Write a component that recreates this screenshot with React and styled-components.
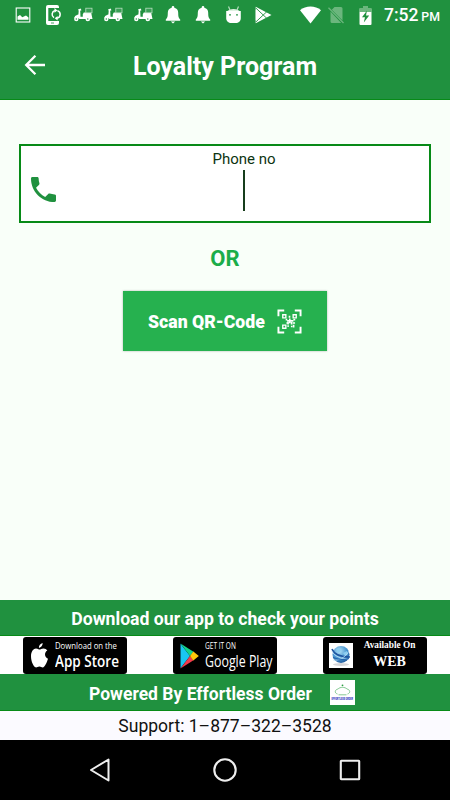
import React, { useState } from 'react';
import styled, { createGlobalStyle } from 'styled-components';

function ImageIcon() {
  return (
    <svg width="16" height="16" viewBox="0 0 16 16">
      <rect x="1.2" y="1" width="13.6" height="14" fill="none" stroke="#fff" strokeWidth="1.1" />
      <path d="M2.5 12.8V9.5L5 8l2.3 2.2L11 8.6l2.5 2v2.2z" fill="#fff" />
    </svg>
  );
}

function PhoneSyncIcon() {
  return (
    <svg width="17" height="20" viewBox="0 0 17 20">
      <path d="M3 0h9a2 2 0 0 1 2 2v1H3v13h11v2a2 2 0 0 1-2 2H3a2 2 0 0 1-2-2V2a2 2 0 0 1 2-2z" fill="#fff" />
      <path d="M1 3h2.300v13H1z" fill="#fff" />
      <path d="M9 12.700a4 4 0 0 1 .9-7.200M12.400 5.600a4 4 0 0 1-.3 7.700" fill="none" stroke="#fff" strokeWidth="1.500" />
      <path d="M9.500 3.100v4.600l2.900-2.300zM12.600 11v4.600l-2.900-2.300z" fill="#fff" />
      <path d="M6 18h3" stroke="#20913f" strokeWidth=".8" />
    </svg>
  );
}

function ScooterIcon() {
  return (
    <svg width="20" height="16" viewBox="0 0 20 16">
      <path d="M5 2.500L7.600 1.600l.9 1.600-1.300.6.3 6h2.300V7.300l1-1.800h7.400l.6 3.200.7 3.300H6.500L5 10.900l-3.700.2.800-2 2.400-1.400.9-.3.300-3.600z" fill="#fff" />
      <circle cx="3.300" cy="12" r="2.200" fill="#fff" />
      <circle cx="3.300" cy="12" r=".7" fill="#20913f" />
      <circle cx="14.800" cy="12" r="2.300" fill="#fff" />
      <circle cx="14.800" cy="12" r=".7" fill="#20913f" />
      <rect x="12.800" y="1.200" width="6.200" height="4.600" fill="#3a9f56" stroke="#b9ddc1" strokeWidth=".8" />
    </svg>
  );
}

function BellIcon() {
  return (
    <svg width="16" height="18" viewBox="0 0 16 18">
      <path d="M8 0a1.300 1.300 0 0 1 1.300 1.300v.5C12 2.400 13.200 4.300 13.200 6.800c0 4 .5 5.200 2 6.700v1.300H.8v-1.300C2.300 12 2.800 10.800 2.800 6.800c0-2.500 1.200-4.400 3.900-5v-.5A1.300 1.300 0 0 1 8 0zM5.800 15.400h4.400L8 17.600z" fill="#fff" />
    </svg>
  );
}

function AndroidIcon() {
  return (
    <svg width="17" height="18" viewBox="0 0 17 18">
      <path d="M3.500.5L5 4M13.500.5L12 4" stroke="#b5dcbd" strokeWidth="1.200" />
      <path d="M2 5.500c2-3.500 11-3.500 13 0z" fill="#dff1e2" />
      <path d="M1.200 5h14.600v7c0 3.500-2.300 5-5 5H6.200c-2.700 0-5-1.500-5-5z" fill="#fff" />
      <circle cx="5" cy="8.800" r=".9" fill="#20913f" />
      <circle cx="12" cy="8.800" r=".9" fill="#20913f" />
    </svg>
  );
}

function PlayIcon() {
  return (
    <svg width="17" height="18" viewBox="0 0 17 18">
      <path d="M.7.8L16.500 9 .7 17.200z" fill="#fff" />
      <path d="M1 2.200L12.500 13M1 15.800L12.500 5" stroke="#20913f" strokeWidth=".9" />
      <path d="M.7 3.500l5.700 5.500-5.700 5.500z" fill="#fff" />
    </svg>
  );
}

function WifiIcon() {
  return (
    <svg width="21" height="18" viewBox="0 0 22 18">
      <path d="M0 4C6-1.200 16-1.200 22 4L11 17.800z" fill="#fff" />
    </svg>
  );
}

function NoSimIcon() {
  return (
    <svg width="17" height="18" viewBox="0 0 17 18">
      <path d="M6.500 1H13a1.500 1.500 0 0 1 1.500 1.500v12L3.800 3.700zM2.500 5.400L13.200 17H4a1.500 1.500 0 0 1-1.500-1.500z" fill="#6bb67d" />
      <path d="M.5 1.800L15.500 17" stroke="#6bb67d" strokeWidth="1.300" />
    </svg>
  );
}

function BatteryIcon() {
  return (
    <svg width="13" height="19" viewBox="0 0 13 19">
      <path d="M4 0h5v2h2.700A1.300 1.300 0 0 1 13 3.300V6H0V3.300A1.300 1.300 0 0 1 1.300 2H4z" fill="#6bb67d" />
      <path d="M.5 6h12v12a1 1 0 0 1-1 1h-10a1 1 0 0 1-1-1z" fill="#fff" />
      <path d="M8 4.500l-5 6.800h3l-1.200 5.200 5.400-7H7z" fill="#20913f" />
    </svg>
  );
}

function BackArrow() {
  return (
    <svg width="22" height="22" viewBox="0 0 22 22">
      <path d="M21 11H2.800M11.400 1.800L2.200 11l9.200 9.200" fill="none" stroke="#fff" strokeWidth="2.300" />
    </svg>
  );
}

function PhoneIcon() {
  return (
    <svg width="25" height="25" viewBox="3 3 18 18">
      <path fill="#20913f" d="M6.620 10.790c1.440 2.830 3.760 5.140 6.590 6.590l2.200-2.200c.27-.27.67-.36 1.020-.24 1.120.37 2.330.57 3.570.57.55 0 1 .45 1 1V20c0 .55-.45 1-1 1-9.390 0-17-7.610-17-17 0-.55.45-1 1-1h3.500c.55 0 1 .45 1 1 0 1.250.2 2.450.57 3.570.11.35.03.74-.25 1.020l-2.200 2.200z" />
    </svg>
  );
}

function QrIcon() {
  return (
    <svg width="25" height="25" viewBox="0 0 26 26" fill="none" stroke="#fff">
      <path d="M1.500 7.500v-6h6M18.500 1.500h6v6M24.500 18.500v6h-6M7.500 24.500h-6v-6" strokeWidth="2" />
      <path d="M6 6h3.200v3.200H6zM16.800 6H20v3.200h-3.200zM6 16.800h3.200V20H6z" strokeWidth="1.400" />
      <path d="M13 7v2M13.300 9.800v5M10.500 12.300h6.500M9 11h1.700M11.500 13.500v2.700M15.200 13.500v2.700M9.800 14.500h1.500M16.500 14.500h2.300M10.800 17.800h1.500M14.500 18.200h1.600M17.300 16.500v2.700M17 11h2" strokeWidth="1.700" />
    </svg>
  );
}

function AppleLogo() {
  return (
    <svg width="17" height="26" viewBox="0 0 17 26">
      <path fill="#fff" d="M11.600 0c.2 2.500-1.700 4.700-3.700 4.800C7.700 2.600 9.500.5 11.600 0zM8.500 6.600c1-.1 2-1.100 4-1.100 1.700 0 3 .9 3.800 2.100-3.300 2-2.900 6.800.7 8.200-1 3.500-3.200 8.600-5.300 8.600-1.300 0-1.700-.8-3.300-.8s-2.200.8-3.400.8C2.800 24.400 0 18.800 0 13.300c0-5 2.500-7.800 5-7.800 1.700 0 2.600 1.100 3.500 1.100z" />
    </svg>
  );
}

function GooglePlayLogo() {
  return (
    <svg width="19" height="26" viewBox="0 0 19 26">
      <path d="M.5.800L10 13 .5 25.200z" fill="#19c7f2" />
      <path d="M.5.500l13 8.300L10 13z" fill="#13d38a" />
      <path d="M.5 25.500l13-8.300L10 13z" fill="#f13b4c" />
      <path d="M13.300 8.600L18.800 13l-5.500 4.400L10 13z" fill="#ffc80a" />
    </svg>
  );
}

function GlobeLogo() {
  return (
    <svg width="24" height="25" viewBox="0 0 24 25">
      <defs>
        <radialGradient id="globe" cx=".4" cy=".3" r=".75">
          <stop offset="0" stopColor="#b4e2f7" />
          <stop offset=".6" stopColor="#4593cf" />
          <stop offset="1" stopColor="#1c5396" />
        </radialGradient>
      </defs>
      <rect width="24" height="25" fill="#fff" />
      <ellipse cx="12" cy="21.500" rx="8" ry="1.500" fill="#d5d5d8" />
      <circle cx="12" cy="11.500" r="8.500" fill="url(#globe)" />
      <path d="M7 6l4-1 1 3-3 2zM14 10l4-2 1 3-3 2z" fill="#8ccdf0" />
      <path d="M3 6c2 5 9 8 18 8" stroke="#1f55a0" strokeWidth="1.600" fill="none" />
      <path d="M3 8.500c3 5 9 7.500 17 7.500M4 17c5 1 12-2 16-9" stroke="#c3e5f7" strokeWidth=".8" fill="none" />
      <path d="M4 14.500c5 2 10 3 16 1" stroke="#2465ae" strokeWidth="1.200" fill="none" />
    </svg>
  );
}

function EffortlessLogo() {
  return (
    <svg width="25" height="25" viewBox="0 0 25 25">
      <rect width="25" height="25" fill="#fff" />
      <circle cx="12.500" cy="5.300" r=".9" fill="#2a9c40" />
      <path d="M7.500 14C4 13 5 9.500 8 9c2-2.200 7-2.200 9 0 3 .5 4 4 .500 5M8.500 14.800h8" stroke="#68bd79" strokeWidth=".8" fill="none" />
      <text x="1.500" y="19.700" textLength="21.500" lengthAdjust="spacingAndGlyphs" fontFamily="Roboto, sans-serif" fontSize="2.900" fontWeight="900" fill="#3035c0">EFFORTLESS ORDER</text>
    </svg>
  );
}

function App() {
  const [phone, setPhone] = useState("");

  return (
    <Screen>
      <GlobalStyle />
      <StatusBar>
        <Slot><ImageIcon /></Slot>
        <Slot><PhoneSyncIcon /></Slot>
        <Slot><ScooterIcon /></Slot>
        <Slot><ScooterIcon /></Slot>
        <Slot><ScooterIcon /></Slot>
        <Slot><BellIcon /></Slot>
        <Slot><BellIcon /></Slot>
        <Slot><AndroidIcon /></Slot>
        <Slot><PlayIcon /></Slot>
        <System>
          <WifiIcon />
          <NoSimIcon />
          <BatteryIcon />
        </System>
        <Clock>7:52 <small>PM</small></Clock>
      </StatusBar>

      <Header>
        <BackButton aria-label="Back"><BackArrow /></BackButton>
        <Title>Loyalty Program</Title>
      </Header>

      <Content>
        <PhoneField onClick={() => setPhone("")}>
          <PhoneIcon />
          <FieldBody>
            <Label>Phone no</Label>
            <Entry>{phone}<Caret /></Entry>
          </FieldBody>
        </PhoneField>
        <Or>OR</Or>
        <ScanButton>
          <span>Scan QR-Code</span>
          <QrIcon />
        </ScanButton>
      </Content>

      <Banner $height={36}>
        <BannerText $size={17.65}>Download our app to check your points</BannerText>
      </Banner>
      <Stores>
        <Badge $pad={8} $gap={7}>
          <AppleLogo />
          <BadgeText>
            <Small $size={8.8} $squeeze={0.88}>Download on the</Small>
            <Big $size={16.5} $squeeze={0.82}>App Store</Big>
          </BadgeText>
        </Badge>
        <Badge $pad={7} $gap={6}>
          <GooglePlayLogo />
          <BadgeText>
            <Small $size={8.2} $squeeze={0.8}>GET IT ON</Small>
            <Big $size={16.5} $squeeze={0.75} $weight={500}>Google Play</Big>
          </BadgeText>
        </Badge>
        <Badge $pad={6} $gap={9}>
          <GlobeLogo />
          <WebText>
            <Small $size={9.3}>Available On</Small>
            <Big $size={14} $weight={700}>WEB</Big>
          </WebText>
        </Badge>
      </Stores>
      <Banner $height={37}>
        <BannerText $size={17.5}>Powered By Effortless Order</BannerText>
        <EffortlessLogo />
      </Banner>
      <Support>Support: 1–877–322–3528</Support>

      <NavBar>
        <svg width="22" height="26" viewBox="0 0 22 26">
          <path d="M19.500 2.500v21L2 13z" fill="none" stroke="#eee" strokeWidth="2" strokeLinejoin="round" />
        </svg>
        <svg width="24" height="24" viewBox="0 0 24 24">
          <circle cx="12" cy="12" r="10.700" fill="none" stroke="#eee" strokeWidth="2.100" />
        </svg>
        <svg width="22" height="22" viewBox="0 0 22 22">
          <rect x="1.800" y="1.800" width="18.400" height="18.400" rx=".5" fill="none" stroke="#eee" strokeWidth="2.100" />
        </svg>
      </NavBar>
    </Screen>
  );
}

export default App;


const GlobalStyle = createGlobalStyle`
* {
  box-sizing: border-box;
}
body {
  margin: 0;
  font-family: Roboto, "Liberation Sans", sans-serif;
}
svg {
  display: block;
  flex-shrink: 0;
}
`

const Screen = styled.div`
width: 450px;
height: 800px;
display: flex;
flex-direction: column;
overflow: hidden;
background: #f9fff9;
`

const StatusBar = styled.div`
height: 30px;
flex-shrink: 0;
display: flex;
align-items: center;
padding-left: 8px;
background: #20913f;
`

const Slot = styled.div`
width: 30px;
flex-shrink: 0;
display: flex;
justify-content: center;
`

const System = styled.div`
width: 73px;
flex-shrink: 0;
margin-left: 22px;
display: flex;
align-items: center;

svg + svg {
  margin-left: 7px;
}
svg:last-child {
  margin-left: 14px;
}
`

const Clock = styled.div`
margin-left: 11px;
color: #fff;
font-size: 17.5px;
font-weight: 500;
line-height: 30px;
padding-top: 2px;
white-space: nowrap;
word-spacing: -1.5px;

small {
  font-size: 12.3px;
}
`

const Header = styled.header`
height: 70px;
flex-shrink: 0;
display: flex;
align-items: center;
background: #20913f;
border-bottom: 1px solid #078a17;
padding: 1px 24px 0;
`

const BackButton = styled.button`
width: 22px;
padding: 0;
border: 0;
background: none;
`

const Title = styled.h1`
flex: 1;
margin: 3px 22px 0 0;
color: #fff;
font-size: 25px;
font-weight: 700;
line-height: 30px;
text-align: center;
`

const Content = styled.main`
flex: 1;
display: flex;
flex-direction: column;
align-items: center;
padding-top: 44px;
`

const PhoneField = styled.div`
width: 412px;
height: 79px;
display: flex;
align-items: center;
padding: 12px 10px 0;
border: 2px solid #078a17;
background: #fff;
`

const FieldBody = styled.div`
flex: 1;
display: flex;
flex-direction: column;
align-items: center;
margin-top: -18px;
padding-left: 13px;
`

const Label = styled.label`
color: #0c3310;
font-size: 15px;
line-height: 18px;
`

const Entry = styled.div`
height: 41px;
margin-top: 2px;
display: flex;
align-items: center;
`

const Caret = styled.span`
width: 2px;
height: 41px;
background: #173d1c;
`

const Or = styled.div`
margin-top: 21px;
color: #1bad49;
font-size: 22px;
font-weight: 700;
line-height: 30px;
`

const ScanButton = styled.button`
width: 204px;
height: 60px;
margin-top: 17px;
padding: 0 25px;
display: flex;
align-items: center;
justify-content: space-between;
border: 0;
background: #26b14f;
box-shadow: 0 0 2px rgba(0, 0, 0, .3);
color: #fff;
font-family: inherit;
font-size: 17.7px;
font-weight: 900;
white-space: nowrap;

span {
  padding-top: 2px;
}
`

const Banner = styled.div`
height: ${props => props.$height}px;
flex-shrink: 0;
display: flex;
align-items: center;
justify-content: center;
gap: 18px;
padding: 1px 6px 0 0;
background: #20913f;
border-bottom: 1px solid #078a17;
`

const BannerText = styled.div`
color: #fff;
font-size: ${props => props.$size}px;
font-weight: 700;
line-height: 22px;
padding-top: 2px;
white-space: nowrap;

&:only-child {
  padding-left: 6px;
}
`

const Stores = styled.div`
height: 38px;
flex-shrink: 0;
display: flex;
justify-content: space-between;
padding: 1px 23px 0;
background: #fff;
`

const Badge = styled.div`
width: 104px;
height: 37px;
display: flex;
align-items: center;
gap: ${props => props.$gap}px;
padding-left: ${props => props.$pad}px;
border-radius: 3px;
background: #000;
color: #fff;
`

const BadgeText = styled.div`
width: 66px;
margin-top: -2px;
font-family: "Open Sans", "Noto Sans", sans-serif;
white-space: nowrap;
`

const WebText = styled.div`
flex: 1;
margin-top: -1px;
padding-right: 10px;
font-family: "Liberation Serif", serif;
text-align: center;
white-space: nowrap;
`

/* the store badges use condensed lettering */
const Small = styled.div`
font-size: ${props => props.$size}px;
line-height: 12px;
transform: scaleX(${props => props.$squeeze || 1});
transform-origin: left;

${WebText} & {
  font-weight: 700;
}
`

const Big = styled.div`
font-size: ${props => props.$size}px;
font-weight: ${props => props.$weight || 600};
line-height: 18px;
transform: scaleX(${props => props.$squeeze || 1});
transform-origin: left;

${WebText} & {
  margin-top: 2px;
}
`

const Support = styled.div`
height: 29px;
flex-shrink: 0;
background: #fbfaff;
color: #111;
font-size: 17.55px;
line-height: 31px;
text-align: center;
`

const NavBar = styled.nav`
height: 60px;
flex-shrink: 0;
display: flex;
align-items: center;
justify-content: space-between;
padding: 0 89px;
background: #000;
`
